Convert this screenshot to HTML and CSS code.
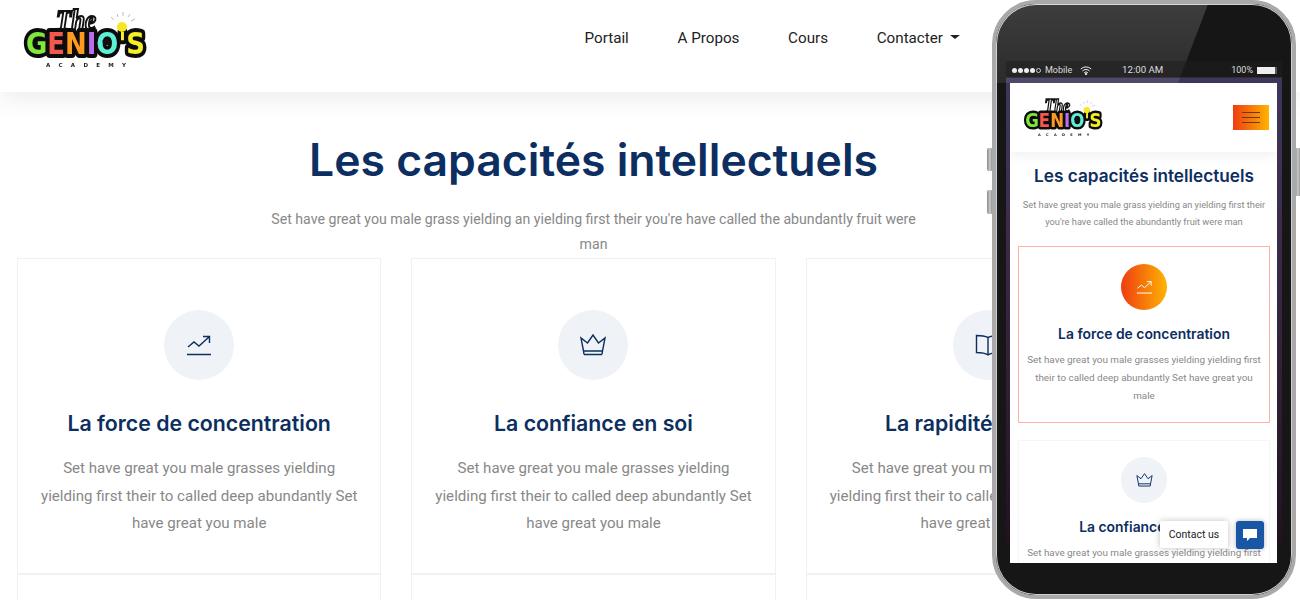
FILE: index.html
```html
<!DOCTYPE html>
<html lang="fr">
<head>
<meta charset="utf-8">
<title>The Genio's Academy</title>
<link rel="stylesheet" href="styles.css">
</head>
<body>
<svg class="defs" width="0" height="0" aria-hidden="true">
  <defs>
    <symbol id="logo" viewBox="0 0 126 64">
      <text x="34" y="25" class="logo-the" textLength="40" lengthAdjust="spacingAndGlyphs">The</text>
      <g class="logo-rays">
        <path d="M92 15l-3-3M96 12l-1-3M101 11V7M106 12l2-3M109 16l4-2"/>
      </g>
      <text x="4" y="49" class="logo-main" textLength="119" lengthAdjust="spacingAndGlyphs"><tspan class="lg">G</tspan><tspan class="le">E</tspan><tspan class="ln">N</tspan><tspan class="li">I</tspan><tspan class="lo">O</tspan><tspan class="ly">'S</tspan></text>
      <circle class="logo-bulb" cx="100" cy="22" r="5"/>
      <path class="logo-star" d="M85 32l1.600 3.400 3.700.4-2.800 2.500.8 3.700-3.300-1.900-3.300 1.900.8-3.700-2.800-2.500 3.700-.4z"/>
      <text x="24" y="62" class="logo-sub" textLength="80">ACADEMY</text>
    </symbol>
    <symbol id="i-chart" viewBox="0 0 26 22">
      <path d="M2 13l6-5 5 4 10-9M17 2.500h6.500V9M1 20.500h24"/>
    </symbol>
    <symbol id="i-crown" viewBox="0 0 26 22">
      <path d="M4 20.500h18M3.500 17h19L25 4l-6.500 5L13 1 7.500 9 1 4l2.500 13zM4 20.500l-.5-3.500M22 20.500l.5-3.500"/>
    </symbol>
    <symbol id="i-book" viewBox="0 0 26 22">
      <path d="M13 3.500C10 2 6 1.500 1.500 1.500v17c4.500 0 8.500.5 11.500 2.500 3-2 7-2.500 11.500-2.500v-17C20 1.500 16 2 13 3.500zM13 3.500V21"/>
    </symbol>
  </defs>
</svg>

<div class="page">
  <header class="site-header">
    <svg class="logo"><use href="#logo"/></svg>
    <nav class="nav">
      <a>Portail</a>
      <a>A Propos</a>
      <a>Cours</a>
      <a class="dropdown">Contacter</a>
    </nav>
  </header>

  <main class="section">
    <h2 class="section-title">Les capacités intellectuels</h2>
    <p class="section-lead">Set have great you male grass yielding an yielding first their you're have called the abundantly fruit were man</p>
    <div class="cards">
      <article class="card">
        <span class="circle"><svg class="icon"><use href="#i-chart"/></svg></span>
        <h3>La force de concentration</h3>
        <p>Set have great you male grasses yielding yielding first their to called deep abundantly Set have great you male</p>
      </article>
      <article class="card">
        <span class="circle"><svg class="icon"><use href="#i-crown"/></svg></span>
        <h3>La confiance en soi</h3>
        <p>Set have great you male grasses yielding yielding first their to called deep abundantly Set have great you male</p>
      </article>
      <article class="card">
        <span class="circle"><svg class="icon"><use href="#i-book"/></svg></span>
        <h3>La rapidité de calcul</h3>
        <p>Set have great you male grasses yielding yielding first their to called deep abundantly Set have great you male</p>
      </article>
      <article class="card"></article>
      <article class="card"></article>
      <article class="card"></article>
    </div>
  </main>
</div>

<aside class="phone">
  <span class="side-btn left one"></span>
  <span class="side-btn left two"></span>
  <span class="side-btn right one"></span>
  <div class="phone-body">
    <div class="wallpaper"></div>
    <div class="glare"></div>
    <div class="status-bar">
      <span class="status-left">
        <span class="dots"><i></i><i></i><i></i><i></i><i class="off"></i></span>
        <span>Mobile</span>
        <svg class="wifi" viewBox="0 0 12 9"><path d="M.8 3a7.500 7.500 0 0 1 10.400 0M2.500 4.900a5 5 0 0 1 7 0M4.200 6.700a2.600 2.600 0 0 1 3.600 0"/><circle cx="6" cy="8" r=".8"/></svg>
      </span>
      <span class="status-time">12:00 AM</span>
      <span class="status-right">100%<span class="battery"></span></span>
    </div>
    <div class="screen">
      <div class="m-header">
        <svg class="m-logo"><use href="#logo"/></svg>
        <span class="burger"><i></i><i></i><i></i></span>
      </div>
      <div class="m-section">
        <h2 class="m-title">Les capacités intellectuels</h2>
        <p class="m-lead">Set have great you male grass yielding an yielding first their you're have called the abundantly fruit were man</p>
        <article class="m-card active">
          <span class="m-circle"><svg class="m-icon"><use href="#i-chart"/></svg></span>
          <h3>La force de concentration</h3>
          <p>Set have great you male grasses yielding yielding first their to called deep abundantly Set have great you male</p>
        </article>
        <article class="m-card">
          <span class="m-circle"><svg class="m-icon"><use href="#i-crown"/></svg></span>
          <h3>La confiance en soi</h3>
          <p>Set have great you male grasses yielding yielding first their to called deep abundantly Set have great you male</p>
        </article>
      </div>
      <div class="chat">
        <span class="chat-label">Contact us</span>
        <span class="chat-btn">
          <svg class="chat-icon" viewBox="0 0 16 14"><path d="M1 1h14v9H8l-3 3v-3H1z"/></svg>
        </span>
      </div>
    </div>
  </div>
</aside>
</body>
</html>
```

FILE: styles.css
```css
* { box-sizing: border-box; }
html, body { margin: 0; height: 100%; overflow: hidden; background: #fff; }
body { font-family: Roboto, "Liberation Sans", sans-serif; color: #888; position: relative; }
.defs { position: absolute; }

/* Logo */
.logo-the { font: italic 700 29px "Liberation Serif", serif; fill: #fff; stroke: #111; stroke-width: 2.200px; }
.logo-main { font: 700 30px "DejaVu Sans", sans-serif; stroke: #0c0c0c; stroke-width: 8px; stroke-linejoin: round; paint-order: stroke; }
.logo-sub { font: 700 5.500px "DejaVu Sans", sans-serif; fill: #222; }
.logo-star { fill: #111; }
.logo-bulb { fill: #f6e626; }
.logo-rays path { fill: none; stroke: #bbb; stroke-width: 1; }
.lg { fill: #7fe83a; } .le { fill: #f4574b; } .ln { fill: #ff9a1f; }
.li { fill: #bb6cf0; } .lo { fill: #5ef0d6; } .ly { fill: #f6ee26; }

/* Header */
.page { height: 600px; overflow: hidden; }
.site-header { height: 92px; display: flex; align-items: center; justify-content: space-between; padding: 0 340px 0 22px; background: #fff; box-shadow: 0 8px 24px rgba(0, 0, 0, .07); position: relative; }
.logo { width: 126px; height: 64px; margin-top: -19px; filter: blur(.4px); }
.nav { display: flex; gap: 48.700px; margin-top: -17px; }
.nav a { color: #222; font-size: 15.200px; line-height: 20px; }
.dropdown { display: flex; align-items: center; gap: 7px; }
.dropdown::after { content: ""; border-top: 4.500px solid #222; border-left: 5px solid transparent; border-right: 5px solid transparent; margin-top: -2px; }

/* Section */
.section { width: 1153px; margin-left: 17px; text-align: center; }
.section-title { margin: 36px 0 0; font: 600 44.500px/64px Inter, "Liberation Sans", sans-serif; color: #0c2e60; }
.section-lead { width: 660px; margin: 15px auto 0; font-size: 14.150px; line-height: 25px; color: #888; }
.cards { display: grid; grid-template-columns: repeat(3, 1fr); column-gap: 30px; margin-top: 1px; }
.card { height: 316px; border: 1px solid #f0f1f3; padding: 51px 20px 0; }
.circle { display: flex; width: 70px; height: 70px; margin: 0 auto; border-radius: 50%; background: #eff3f7; align-items: center; justify-content: center; }
.icon { width: 26px; height: 22px; fill: none; stroke: #0c2e60; stroke-width: 1.400; }
.card h3 { margin: 28px 0 0; font: 600 21.300px/30px Inter, "Liberation Sans", sans-serif; color: #0c2e60; }
.card p { margin: 17px 0 0; font-size: 15.100px; line-height: 27.500px; color: #888; }

/* Phone */
.phone { position: absolute; left: 992px; top: 0; width: 304px; height: 599px; }
.side-btn { position: absolute; background: linear-gradient(90deg, #888, #ccc 50%, #777); border-radius: 2px; }
.side-btn.left { left: -5px; width: 6px; }
.side-btn.left.one { top: 148px; height: 23px; }
.side-btn.left.two { top: 190px; height: 24px; }
.side-btn.right { right: -5px; width: 6px; top: 148px; height: 48px; }
.phone-body { position: relative; width: 100%; height: 100%; overflow: hidden; background: #161616; border: 4px solid #a9a9a9; border-radius: 44px; box-shadow: inset 0 0 0 1px #d0d0d0; }
.glare { position: absolute; left: 0; top: 0; width: 100%; height: 79px; background: linear-gradient(180deg, rgba(255, 255, 255, .17), rgba(255, 255, 255, .09)); clip-path: polygon(0 0, 212px 0, 182px 100%, 0 100%); }
.wallpaper { position: absolute; left: 10px; right: 10px; top: 73px; height: 465px; background: linear-gradient(180deg, #40365a, #3c2d4d 30%, #2a1a2c 80%, #20131f); }
.status-bar { position: absolute; left: 10px; right: 10px; top: 57px; height: 17px; background: rgba(30, 30, 30, .5); color: #ddd; font-size: 9px; line-height: 18px; padding: 0 6px; }
.status-left { position: absolute; left: 6px; top: 0; display: flex; align-items: center; height: 18px; gap: 3px; }
.dots { display: flex; gap: 1px; margin-right: 1px; }
.dots i { width: 5px; height: 5px; border-radius: 50%; background: #eee; }
.dots i.off { background: none; border: 1px solid #ccc; }
.wifi { width: 12px; height: 9px; margin-left: 5px; fill: #eee; stroke: #eee; stroke-width: 1; }
.wifi path { fill: none; }
.status-time { position: absolute; left: 116px; top: 0; font-size: 9.700px; }
.status-right { position: absolute; right: 5px; top: 0; display: flex; align-items: center; height: 18px; gap: 4px; }
.battery { width: 20px; height: 7px; background: #eee; border-right: 2px solid #555; }
.screen { position: absolute; left: 14px; top: 79px; width: 267px; height: 480px; background: #fff; overflow: hidden; }
.m-header { height: 69px; display: flex; align-items: flex-start; justify-content: space-between; padding: 13px 8px 0 12px; box-shadow: 0 4px 12px rgba(0, 0, 0, .06); position: relative; }
.m-logo { width: 82px; height: 41px; filter: blur(.4px); }
.burger { display: flex; flex-direction: column; justify-content: center; gap: 4px; width: 36px; height: 25px; margin-top: 9px; padding: 0 9px; background: linear-gradient(90deg, #ee3d12, #ffb400); }
.burger i { height: 1px; background: #6b3a10; }
.m-section { padding: 0 7px 0 8px; text-align: center; }
.m-title { margin: 12px 0 0; font: 600 17.200px/24px Inter, "Liberation Sans", sans-serif; color: #0c2e60; }
.m-lead { margin: 7.500px 0 0; font-size: 9.250px; line-height: 17px; color: #888; }
.m-card { height: 177px; margin-top: 16.500px; padding: 16.500px 6px 0; border: 1px solid #f4f5f7; }
.m-card.active { border-color: #ffb3a0; }
.m-circle { display: flex; width: 46px; height: 46px; margin: 0 auto; border-radius: 50%; background: #eff3f7; align-items: center; justify-content: center; }
.m-icon { width: 17px; height: 14px; fill: none; stroke: #0c2e60; stroke-width: 1.500; }
.active .m-circle { background: linear-gradient(90deg, #ee3d12, #ffb400); }
.active .m-icon { stroke: #fff; }
.m-card h3 { margin: 14px 0 0; font: 600 13.900px/20px Inter, "Liberation Sans", sans-serif; color: #0c2e60; }
.m-card p { margin: 7px 0 0; font-size: 9.900px; line-height: 18px; color: #888; }
.chat { position: absolute; left: 150px; top: 438px; display: flex; gap: 8px; }
.chat-label { width: 68px; height: 27px; background: #fff; border-radius: 2px; box-shadow: 0 0 6px rgba(0, 0, 0, .25); color: #222; font-size: 10.500px; line-height: 27px; text-align: center; }
.chat-btn { display: flex; width: 28px; height: 28px; border-radius: 3px; background: #1a56a6; box-shadow: 0 0 5px rgba(0, 0, 0, .3); align-items: center; justify-content: center; }
.chat-icon { width: 16px; height: 14px; fill: #fff; }
```
